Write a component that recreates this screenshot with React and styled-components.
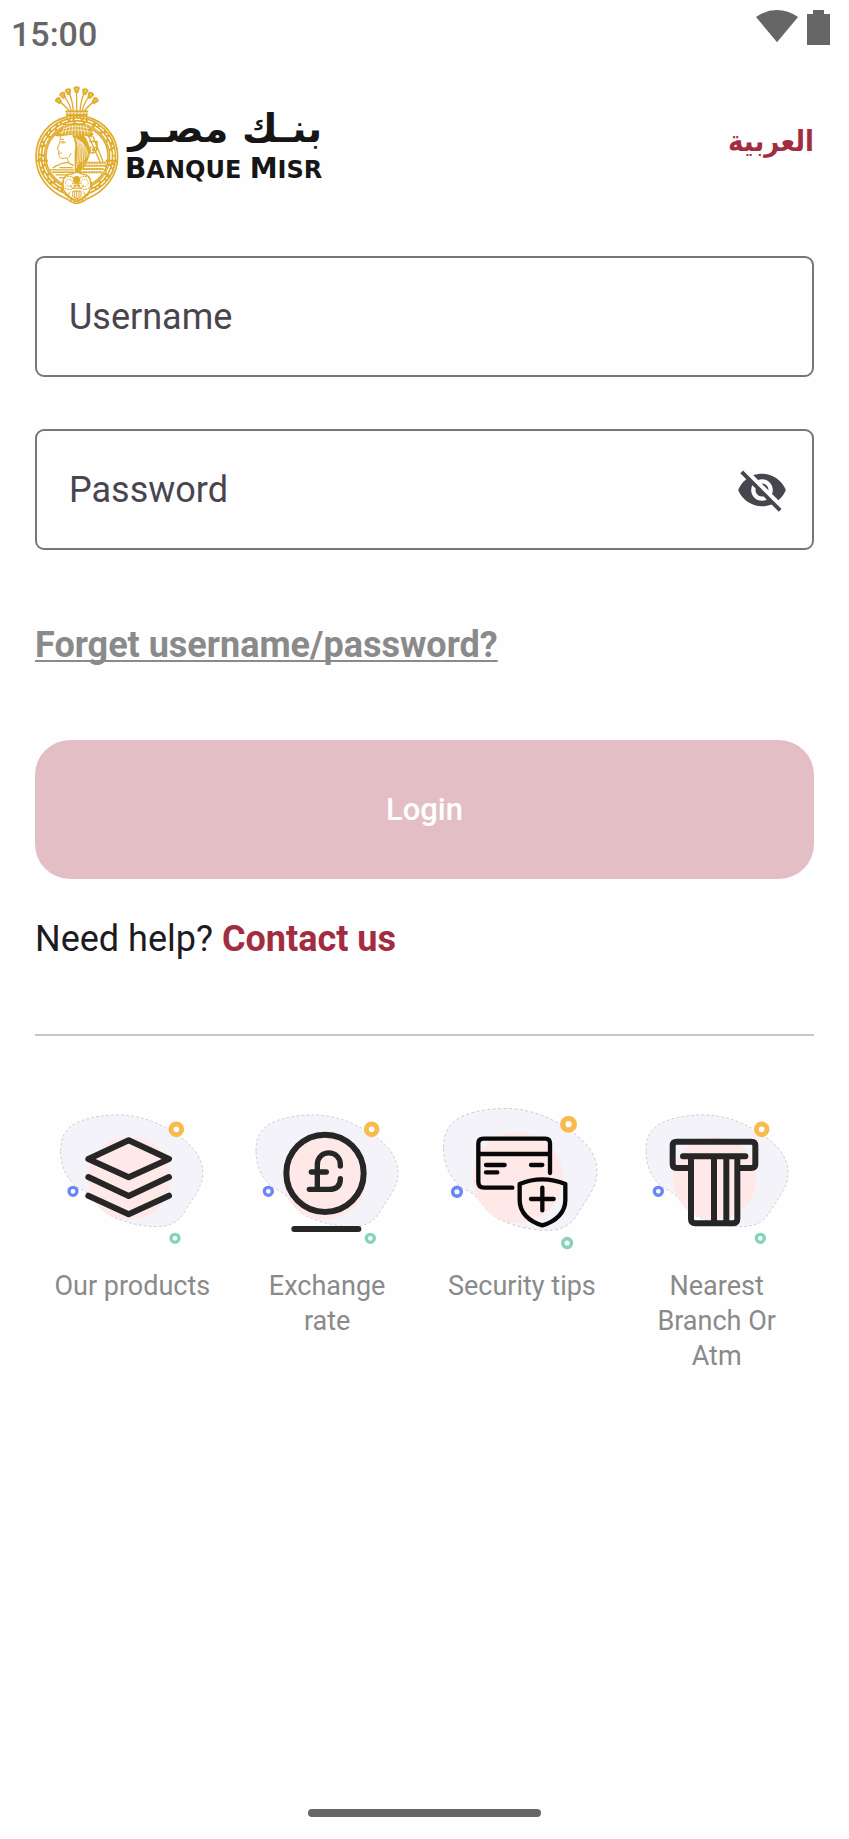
import React, { useState } from "react";
import styled, { createGlobalStyle } from "styled-components";
import { MdVisibilityOff, MdVisibility } from "react-icons/md";

const GlobalStyle = createGlobalStyle`
  *, *::before, *::after { box-sizing: border-box; }
  body {
    margin: 0;
    background: #fefefe;
    color: #1c1b1f;
    font-family: Roboto, "DejaVu Sans", sans-serif;
    font-size: 36px;
    line-height: 52px;
  }
  button, input { font: inherit; }
`;

const Screen = styled.div`
  min-height: 100vh;
  display: flex;
  flex-direction: column;
`;

const StatusBar = styled.header`
  display: flex;
  justify-content: space-between;
  align-items: flex-start;
  height: 66px;
  padding: 10px 19px 0 11px;
  color: #666;
`;

const Clock = styled.time`
  font-size: 34px;
  font-weight: 500;
  line-height: 48px;
`;

const StatusIcons = styled.div`
  display: flex;
  gap: 9px;
  svg { display: block; }
`;

const Main = styled.main`
  display: flex;
  flex-direction: column;
  padding: 20px 35px 52px;
`;

const Header = styled.div`
  display: flex;
  justify-content: space-between;
  align-items: center;
  margin-bottom: 52px;
`;

const Logo = styled.div`
  display: flex;
  align-items: center;
  gap: 6px;
  color: #161616;
  svg { display: block; }
`;

const Wordmark = styled.div`
  display: flex;
  flex-direction: column;
  font-family: "DejaVu Sans", sans-serif;
  white-space: nowrap;
`;

const ArabicName = styled.span`
  font-size: 39px;
  line-height: 48px;
  font-weight: 700;
  text-align: right;
`;

const LatinName = styled.span`
  font-size: 24px;
  line-height: 32px;
  font-weight: 700;
`;

const Initial = styled.span`
  font-size: 28px;
`;

const LanguageLink = styled.a`
  padding-bottom: 8px;
  color: #a32d40;
  font-family: "DejaVu Sans Condensed", "DejaVu Sans", sans-serif;
  font-size: 29px;
  font-weight: 700;
  text-decoration: none;
`;

const Form = styled.form`
  display: flex;
  flex-direction: column;
`;

const Field = styled.div`
  display: grid;
  grid-template-columns: 1fr auto;
  align-items: center;
  height: 121px;
  margin-bottom: ${(p) => (p.$last ? "69px" : "52px")};
  border: 2px solid #79747e;
  border-radius: 9px;
`;

const FieldInput = styled.input`
  grid-area: 1 / 1;
  width: 100%;
  height: 100%;
  padding: 0 32px;
  border: 0;
  outline: 0;
  background: transparent;
  color: #1c1b1f;
`;

const FieldLabel = styled.label`
  grid-area: 1 / 1;
  padding: 0 32px;
  color: #49454f;
  pointer-events: none;
  visibility: ${(p) => (p.$filled ? "hidden" : "visible")};
`;

const IconButton = styled.button`
  display: flex;
  margin-right: 24px;
  padding: 0;
  border: 0;
  background: none;
  color: #49454f;
`;

const ForgotLink = styled.a`
  align-self: flex-start;
  margin-bottom: 69px;
  color: #8a8a8a;
  font-weight: 700;
  text-decoration: underline;
  text-decoration-thickness: 2px;
  text-decoration-skip-ink: none;
  text-underline-offset: 3px;
`;

const LoginButton = styled.button`
  height: 139px;
  border: 0;
  border-radius: 35px;
  background: #e3bfc5;
  color: #fff;
  font-size: 31px;
  font-weight: 500;
`;

const Help = styled.p`
  margin: 34px 0 69px;
`;

const ContactLink = styled.a`
  color: #a32d40;
  font-weight: 700;
  text-decoration: none;
`;

const Divider = styled.hr`
  width: 100%;
  height: 2px;
  margin: 0 0 69px;
  border: 0;
  background: #cac4d0;
`;

const Services = styled.nav`
  display: grid;
  grid-template-columns: repeat(4, 1fr);
`;

const ServiceLink = styled.a`
  display: flex;
  flex-direction: column;
  align-items: center;
  gap: 18px;
  padding: 0 16px;
  color: #8a8a8a;
  font-size: 27px;
  line-height: 35px;
  text-align: center;
  text-decoration: none;
  svg { display: block; }
`;

const HomeIndicator = styled.div`
  width: 233px;
  height: 8px;
  margin: auto auto 22px;
  border-radius: 4px;
  background: #666;
`;

const GOLD = "#dfac2b";

const range = (n) => Array.from({ length: n }, (_, i) => i);

function Emblem() {
  const flowers = [
    [85, 61, -42], [98, 45, -28], [114, 34, -14], [139, 28, 0],
    [164, 34, 14], [180, 45, 28], [194, 61, 42],
  ];
  return (
    <svg width="84" height="118" viewBox="14 16 252 357" fill="none" stroke={GOLD} aria-hidden="true">
      {flowers.map(([x, y, a], i) => (
        <g key={i}>
          <path d={`M${x} ${y}Q${139 + (x - 139) * 0.5} ${y + 22} ${139 + (x - 139) * 0.4} 94`} strokeWidth="4" />
          <g transform={`translate(${x} ${y}) rotate(${a})`}>
            <path d="M-10-7Q0-16 10-7L5 9H-5Z" fill={GOLD} stroke="none" />
            <path d="M-4-4H4M0-5V4" stroke="#fff" strokeWidth="1" />
          </g>
        </g>
      ))}
      <path d="M105 93H174" strokeWidth="6" />
      <path d="M108 105H171M110 120H169" strokeWidth="8" />
      <path d="M110 97V124M120 97V124M130 97V124M140 97V124M150 97V124M160 97V124M169 97V124" strokeWidth="5" />

      <path d="M108 110C55 122 18 168 16 225C14 284 50 333 108 357Q125 371 139 371Q154 371 171 357C228 333 265 284 263 225C261 168 223 122 171 110" strokeWidth="5" />
      <circle cx="140" cy="229" r="108" strokeWidth="22" />
      <circle cx="140" cy="229" r="112" stroke="#fff" strokeWidth="4" strokeDasharray="18 9 6 7" />
      <circle cx="140" cy="229" r="103" stroke="#fff" strokeWidth="4" strokeDasharray="22 8" />
      <circle cx="140" cy="229" r="94" strokeWidth="5" />
      <path d="M16 242H52M227 242H263" strokeWidth="6" />

      <path d="M68 160Q78 165 87 153Q91 135 112 130H164Q183 141 190 161L184 171Q140 157 91 168Q75 171 68 160Z" fill={GOLD} stroke="none" />
      {range(9).map((i) => (
        <path key={i} d={`M${94 + i * 10} 163L${103 + i * 8} 134`} stroke="#fff" strokeWidth="2" />
      ))}
      <path d="M87 158Q135 140 187 157M101 145Q137 130 177 145" stroke="#fff" strokeWidth="2" />

      <path d="M91 168L88 186L80 207L86 212L84 220L87 229Q89 239 110 233L115 247" strokeWidth="3" />
      <path d="M91 178L101 177M91 187Q97 181 105 187Q98 190 91 187M84 219L94 219M115 233L122 219" strokeWidth="3" />

      <path d="M125 165Q140 190 133 213V284C145 280 156 270 166 257C173 237 181 225 181 211C176 190 170 174 159 164Z" fill={GOLD} stroke="none" />
      {range(7).map((i) => (
        <path key={i} d={`M${136 + i * 3} ${173 + i * 2}Q${149 + i * 4} ${190 + i * 3} ${138 + i * 6} ${264 - i * 6}`} stroke="#fff" strokeWidth="2" />
      ))}
      <path d="M174 165L210 246M188 168L219 245M177 184H201V210M184 199Q174 207 182 217Q192 222 199 211Q202 203 193 200" strokeWidth="4" />
      <circle cx="190" cy="209" r="5" fill={GOLD} />

      <path d="M145 248H228M143 257H228M141 267H221M139 277H217" strokeWidth="6" />
      {range(9).map((i) => (
        <path key={i} d={`M${157 + i * 8} 245V279`} stroke="#fff" strokeWidth="1" />
      ))}
      <path d="M67 264Q87 250 111 247L130 257M58 270H131M65 277H131M75 285H131M86 293H126M87 263H127" strokeWidth="4" />

      <path d="M98 307Q99 282 126 282Q139 273 153 282Q181 283 181 307Q187 336 160 352L140 367L119 352Q92 336 98 307Z" fill="#fff" strokeWidth="4" />
      <circle cx="116" cy="309" r="20" strokeWidth="4" strokeDasharray="5 3" />
      <circle cx="163" cy="309" r="20" strokeWidth="4" strokeDasharray="5 3" />
      <circle cx="116" cy="309" r="11" strokeWidth="3" strokeDasharray="4 2" />
      <circle cx="163" cy="309" r="11" strokeWidth="3" strokeDasharray="4 2" />
      <path d="M128 310H151M130 317H149M128 325H152" strokeWidth="4" />
      <circle cx="139" cy="299" r="11" fill={GOLD} stroke="none" />
      <path d="M127 334H152V351Q139 362 127 351ZM139 332V358M133 332V356M146 332V356M126 325L119 316M153 325L160 316M120 335Q105 351 128 357M159 335Q174 351 151 357" strokeWidth="3" />
      <path d="M104 341L127 362H152L175 341" strokeWidth="8" strokeDasharray="9 2" />
    </svg>
  );
}

function WifiIcon() {
  return (
    <svg width="42" height="33" viewBox="0 0 42 33" fill="#666" aria-label="Wi-Fi" role="img">
      <path d="M0 7Q10 0 21 0T42 7L22 31Q21 33 20 31Z" />
    </svg>
  );
}

function BatteryIcon() {
  return (
    <svg width="23" height="35" viewBox="0 0 23 35" fill="#666" aria-label="Battery" role="img">
      <path d="M6 0H17V4H23V35H0V4H6Z" />
    </svg>
  );
}

function Backdrop() {
  return (
    <>
      <path
        d="M62 183C62 142 74 123 98 105C126 87 171 77 218 75C288 71 355 96 404 130C456 161 488 201 488 248C488 291 464 316 438 358C421 389 403 404 367 409C320 414 260 399 222 382C192 367 178 352 166 334C151 312 136 303 116 295C80 268 62 231 62 183Z"
        fill="#f4f3f9"
        stroke="#b9b9bd"
        strokeWidth="2"
        strokeDasharray="8 7"
      />
      <circle cx="268" cy="265" r="125" fill="#ffe8e8" />
      <circle cx="409" cy="118" r="16" fill="#fff" stroke="#f8bb4d" strokeWidth="15" />
      <circle cx="99" cy="304" r="12" fill="#fff" stroke="#6c85f7" strokeWidth="10" />
      <circle cx="405" cy="445" r="12" fill="#fff" stroke="#86d3bb" strokeWidth="10" />
    </>
  );
}

function Illustration({ left, backdropTransform, ink = "#262626", children }) {
  return (
    <svg width="160" height="146" viewBox={`${left} 45 480 438`} aria-hidden="true">
      <g transform={backdropTransform}><Backdrop /></g>
      <g fill="none" stroke={ink} strokeWidth="18" strokeLinecap="round" strokeLinejoin="round">
        {children}
      </g>
    </svg>
  );
}

function ProductsArt() {
  return (
    <Illustration left={36}>
      <path d="M266 151L387 207L266 262L145 207ZM145 261L266 318L387 261M145 317L266 373L387 317" />
    </Illustration>
  );
}

function ExchangeArt() {
  return (
    <Illustration left={21} backdropTransform="translate(-14 0)">
      <circle cx="255" cy="250" r="116" />
      <path d="M163 417H355" />
      <path d="M301 228V224C301 177 232 177 232 224V298M214 246H259M208 298H267Q301 298 301 266" strokeWidth="16" />
    </Illustration>
  );
}

function SecurityArt() {
  return (
    <Illustration left={36} backdropTransform="matrix(1.08 0 0 1.09 -26 -26)" ink="#080808">
      <path
        d="M360 249V160Q360 146 346 146H160Q145 146 145 160V276Q145 293 162 293H247M145 192H360M168 225H224M168 247H202M303 225H337M337 268Q372 268 406 282V330C406 368 377 395 337 406C297 395 269 368 269 330V282Q302 268 337 268ZM337 293V361M303 327H371"
        strokeWidth="13"
      />
    </Illustration>
  );
}

function BranchArt() {
  return (
    <Illustration left={21} backdropTransform="translate(-14 0)">
      <path d="M181 234H140Q128 234 128 222V167Q128 155 140 155H364Q376 155 376 167V222Q376 234 364 234H325M159 199H346M183 199V387Q183 400 196 400H309Q322 400 322 387V199M252 199V400M289 199V400" />
    </Illustration>
  );
}

const SERVICES = [
  { label: "Our products", Art: ProductsArt },
  { label: "Exchange rate", Art: ExchangeArt },
  { label: "Security tips", Art: SecurityArt },
  { label: "Nearest Branch Or Atm", Art: BranchArt },
];

export default function App() {
  const [username, setUsername] = useState("");
  const [password, setPassword] = useState("");
  const [visible, setVisible] = useState(false);
  const EyeIcon = visible ? MdVisibility : MdVisibilityOff;

  return (
    <Screen>
      <GlobalStyle />
      <StatusBar>
        <Clock>15:00</Clock>
        <StatusIcons>
          <WifiIcon />
          <BatteryIcon />
        </StatusIcons>
      </StatusBar>

      <Main>
        <Header>
          <Logo>
            <Emblem />
            <Wordmark>
              <ArabicName lang="ar" dir="rtl">بنـك مصـر</ArabicName>
              <LatinName>
                <Initial>B</Initial>ANQUE <Initial>M</Initial>ISR
              </LatinName>
            </Wordmark>
          </Logo>
          <LanguageLink href="#ar" lang="ar">العربية</LanguageLink>
        </Header>

        <Form onSubmit={(e) => e.preventDefault()}>
          <Field>
            <FieldInput id="username" autoComplete="username" value={username} onChange={(e) => setUsername(e.target.value)} />
            <FieldLabel htmlFor="username" $filled={username !== ""}>Username</FieldLabel>
          </Field>
          <Field $last>
            <FieldInput
              id="password"
              type={visible ? "text" : "password"}
              autoComplete="current-password"
              value={password}
              onChange={(e) => setPassword(e.target.value)}
            />
            <FieldLabel htmlFor="password" $filled={password !== ""}>Password</FieldLabel>
            <IconButton type="button" aria-label="Toggle password visibility" onClick={() => setVisible(!visible)}>
              <EyeIcon size={52} />
            </IconButton>
          </Field>
          <ForgotLink href="#forgot">Forget username/password?</ForgotLink>
          <LoginButton type="submit">Login</LoginButton>
        </Form>

        <Help>
          Need help? <ContactLink href="#contact">Contact us</ContactLink>
        </Help>
        <Divider />

        <Services aria-label="Services">
          {SERVICES.map(({ label, Art }) => (
            <ServiceLink key={label} href="#services">
              <Art />
              {label}
            </ServiceLink>
          ))}
        </Services>
      </Main>

      <HomeIndicator />
    </Screen>
  );
}
